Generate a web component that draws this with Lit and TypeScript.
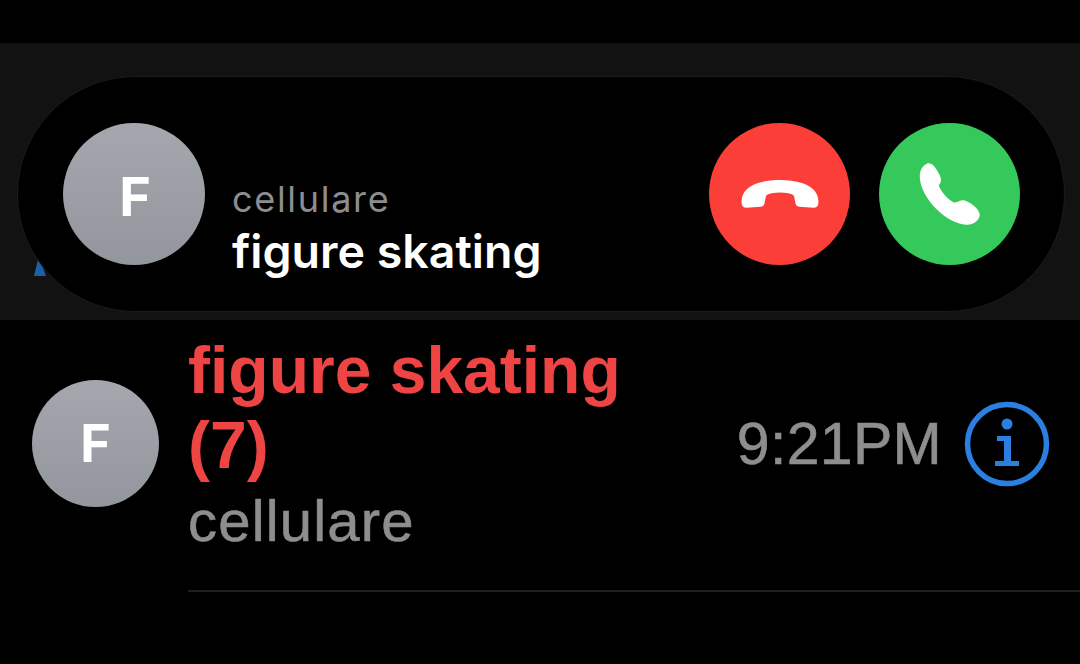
import { LitElement, html, css } from 'lit';
import { customElement } from 'lit/decorators.js';

@customElement('app-root')
export class AppRoot extends LitElement {
  static styles = css`
    :host {
      display: block;
      width: 1080px;
      height: 664px;
      background: #000;
      overflow: hidden;
      font-family: Inter, "Liberation Sans", sans-serif;
    }
    .band {
      position: relative;
      margin-top: 43px;
      height: 277px;
      padding: 33px 15px 0 17px;
      box-sizing: border-box;
      background: #121212;
      display: flex;
      flex-direction: column;
    }
    .speck {
      /* bit of blue app icon peeking out from behind the banner */
      position: absolute;
      left: 34px;
      top: 213px;
      width: 12px;
      height: 20px;
      background: #1d5fa8;
      clip-path: polygon(40% 0, 100% 100%, 0 100%);
    }
    .pill {
      position: relative;
      height: 236px;
      box-sizing: border-box;
      background: #000;
      border: 1px solid #1b1b1b;
      border-radius: 118px;
      padding: 0 44px 0 45px;
      display: flex;
      align-items: center;
    }
    .avatar {
      flex: none;
      border-radius: 50%;
      background: linear-gradient(180deg, #a5a7ae, #94969e);
      color: #fff;
      display: flex;
      align-items: center;
      justify-content: center;
      font-weight: 700;
    }
    .avatar.big {
      width: 142px;
      height: 142px;
      font-size: 54px;
      padding: 5px 0 0 2px;
      box-sizing: border-box;
    }
    .avatar.small {
      width: 127px;
      height: 127px;
      font-size: 52px;
    }
    .caller {
      flex: 1;
      margin: 70px 0 0 27px;
    }
    .kind {
      font-size: 36px;
      line-height: 44px;
      letter-spacing: 1.7px;
      color: #8d8d8f;
    }
    .name {
      font-size: 46.5px;
      line-height: 60px;
      font-weight: 600;
      color: #fff;
    }
    .actions {
      display: flex;
      gap: 29px;
    }
    .btn {
      width: 141px;
      height: 142px;
      border-radius: 50%;
      display: flex;
      align-items: center;
      justify-content: center;
    }
    .btn.red { background: #fb3f38; }
    .btn.green { background: #35c95c; }
    .row {
      height: 272px;
      box-sizing: border-box;
      padding-left: 32px;
      display: flex;
      align-items: flex-start;
    }
    .row .avatar {
      margin-top: 60px;
    }
    .body {
      flex: 1;
      height: 272px;
      box-sizing: border-box;
      margin-left: 29px;
      padding: 13px 30px 0 0;
      border-bottom: 2px solid #1f1f1f;
      display: flex;
      font-family: "Liberation Sans", Arial, sans-serif;
    }
    .text { flex: 1; }
    .title {
      width: 450px;
      font-size: 66px;
      line-height: 75px;
      font-weight: 700;
      color: #ee4444;
    }
    .sub {
      font-size: 58px;
      line-height: 76px;
      letter-spacing: 1.2px;
      color: #8e8e90;
      -webkit-text-stroke: 0.6px #8e8e90;
    }
    .meta {
      display: flex;
      align-items: center;
      gap: 22px;
      height: 222px;
    }
    .time {
      font-size: 59px;
      letter-spacing: 0.3px;
      color: #8e8e90;
      -webkit-text-stroke: 0.6px #8e8e90;
    }
  `;

  render() {
    return html`
      <div class="band">
        <div class="speck"></div>
        <div class="pill">
          <div class="avatar big">F</div>
          <div class="caller">
            <div class="kind">cellulare</div>
            <div class="name">figure skating</div>
          </div>
          <div class="actions">
            <div class="btn red">
              <svg width="78" height="28" viewBox="0 0 233 85">
                <path fill="#fff" d="M0 62C2 34 22 18 50 9C90 -3 143 -3 183 9C211 18 231 34 233 62C234 76 230 85 218 84L176 81C168 80 164 76 163 68L160 52C158 44 150 39 116 38C83 39 75 44 73 52L70 68C69 76 65 80 57 81L15 84C3 85 -1 76 0 62Z"/>
              </svg>
            </div>
            <div class="btn green">
              <svg width="61" height="62" viewBox="0 0 180 185">
                <path fill="#fff" d="M22 2C34 -2 44 6 54 24C64 42 70 50 58 68C64 84 82 106 100 116C112 122 122 108 136 112C152 118 176 134 180 152C182 170 160 186 140 184C80 180 10 110 2 50C-1 28 6 10 22 2Z"/>
              </svg>
            </div>
          </div>
        </div>
      </div>
      <div class="row">
        <div class="avatar small">F</div>
        <div class="body">
          <div class="text">
            <div class="title">figure skating (7)</div>
            <div class="sub">cellulare</div>
          </div>
          <div class="meta">
            <div class="time">9:21PM</div>
            <svg width="86" height="86" viewBox="0 0 86 86">
              <circle cx="43" cy="43" r="39.5" fill="none" stroke="#2b7fe0" stroke-width="5.5"/>
              <circle cx="43" cy="23" r="5.5" fill="#2b7fe0"/>
              <path fill="#2b7fe0" d="M33 35H47V60H55V65H31V60H40V40H33Z"/>
            </svg>
          </div>
        </div>
      </div>
    `;
  }
}
